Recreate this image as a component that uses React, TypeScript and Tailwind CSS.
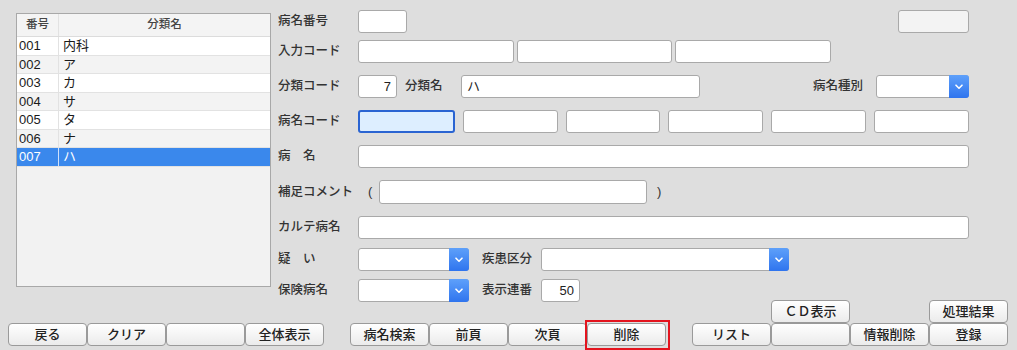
import type { ReactNode } from 'react';

const font = { fontFamily: '"Liberation Sans", "Noto Sans CJK JP", sans-serif' };

const rows = [
  { no: '001', name: '内科' },
  { no: '002', name: 'ア' },
  { no: '003', name: 'カ' },
  { no: '004', name: 'サ' },
  { no: '005', name: 'タ' },
  { no: '006', name: 'ナ' },
  { no: '007', name: 'ハ' },
];

function Box({
  className = '',
  focused = false,
  gray = false,
  children,
}: {
  className?: string;
  focused?: boolean;
  gray?: boolean;
  children?: ReactNode;
}) {
  const skin = focused
    ? 'border-2 border-[#2a64d2] bg-[#ddeeff]'
    : gray
      ? 'border border-[#a9a9a9] bg-[#f3f3f3]'
      : 'border border-[#a9a9a9] bg-white';
  return (
    <div className={`h-[23px] rounded-[3px] text-[13px] text-[#222] flex items-center px-[5px] shrink-0 ${skin} ${className}`}>
      {children}
    </div>
  );
}

function Select({ className = '' }: { className?: string }) {
  return (
    <div className={`h-[23px] rounded-[3px] border border-[#a9a9a9] bg-white flex shrink-0 ${className}`}>
      <div className="flex-1" />
      <div className="w-[20px] -my-px -mr-px rounded-r-[3px] bg-gradient-to-b from-[#5ea0fa] to-[#2f74ee] flex items-center justify-center">
        <svg width="8" height="6" viewBox="0 0 8 6" fill="none">
          <path d="M1 1.2 L4 4.2 L7 1.2" stroke="white" strokeWidth="1.6" strokeLinecap="round" strokeLinejoin="round" />
        </svg>
      </div>
    </div>
  );
}

function Label({ children, className = '' }: { children: ReactNode; className?: string }) {
  return <span className={`text-[12.5px] font-medium text-[#333] whitespace-nowrap shrink-0 ${className}`}>{children}</span>;
}

function Btn({ label = '' }: { label?: string }) {
  return (
    <button
      type="button"
      className="h-[23px] w-[79px] rounded-[4px] border border-[#9a9a9a] bg-gradient-to-b from-white to-[#ebebeb] text-[13px] font-medium text-[#222] flex items-center justify-center"
    >
      {label}
    </button>
  );
}

export default function App() {
  return (
    <div className="w-[1017px] h-[350px] bg-[#dedede] overflow-hidden flex flex-col" style={font}>
      <div className="flex h-[300px]">
        {/* 分類一覧 */}
        <div className="ml-[16px] mt-[13px] w-[255px] h-[274px] border border-[#a8a8a8] bg-[#f2f2f2] flex flex-col">
          <div className="flex h-[23px] bg-[#f4f4f4] border-b border-[#dcdcdc] text-[11.5px] font-medium text-[#444]">
            <div className="w-[42px] border-r border-[#e2e2e2] flex items-center justify-center">番号</div>
            <div className="flex-1 flex items-center justify-center">分類名</div>
          </div>
          {rows.map((r, i) => {
            const sel = r.no === '007';
            const bg = sel ? 'bg-[#3a88ec] text-white' : i % 2 === 0 ? 'bg-white text-[#1a1a1a]' : 'bg-[#f3f3f3] text-[#1a1a1a]';
            return (
              <div key={r.no} className={`flex h-[18.5px] text-[13px] border-b border-[#e2e2e2] ${bg}`}>
                <div className={`w-[42px] pl-[2px] flex items-center border-r ${sel ? 'border-[#cfe1fb]' : 'border-[#e2e2e2]'}`}>{r.no}</div>
                <div className="flex-1 pl-[4px] flex items-center">{r.name}</div>
              </div>
            );
          })}
        </div>

        {/* 入力フォーム */}
        <div className="ml-[7px] w-[691px] flex flex-col">
          <div className="mt-[10px] flex items-center">
            <Label className="w-[80px]">病名番号</Label>
            <Box className="w-[49px]" />
            <div className="flex-1" />
            <Box gray className="w-[71px]" />
          </div>

          <div className="mt-[7px] flex items-center gap-[3px]">
            <Label className="w-[77px]">入力コード</Label>
            <Box className="w-[156px]" />
            <Box className="w-[155px]" />
            <Box className="w-[156px]" />
          </div>

          <div className="mt-[12px] flex items-center">
            <Label className="w-[80px]">分類コード</Label>
            <Box className="w-[39px] justify-end">7</Box>
            <Label className="ml-[8px] w-[56px]">分類名</Label>
            <Box className="w-[239px]">ハ</Box>
            <div className="flex-1" />
            <Label className="mr-[13px]">病名種別</Label>
            <Select className="w-[93px]" />
          </div>

          <div className="mt-[12px] flex items-center">
            <Label className="w-[80px]">病名コード</Label>
            <div className="flex-1 flex gap-[8px]">
              <Box focused className="flex-1" />
              <Box className="flex-1" />
              <Box className="flex-1" />
              <Box className="flex-1" />
              <Box className="flex-1" />
              <Box className="flex-1" />
            </div>
          </div>

          <div className="mt-[12px] flex items-center">
            <Label className="w-[80px]">病　名</Label>
            <Box className="flex-1" />
          </div>

          <div className="mt-[12px] flex items-center">
            <Label className="w-[90px]">補足コメント</Label>
            <span className="w-[11px] text-[13px] text-[#333]">(</span>
            <Box className="w-[268px] h-[24px]" />
            <span className="ml-[10px] text-[13px] text-[#333]">)</span>
          </div>

          <div className="mt-[12px] flex items-center">
            <Label className="w-[80px]">カルテ病名</Label>
            <Box className="flex-1 h-[22px]" />
          </div>

          <div className="mt-[9px] flex items-center">
            <Label className="w-[80px]">疑　い</Label>
            <Select className="w-[111px]" />
            <Label className="ml-[13px] w-[59px]">疾患区分</Label>
            <Select className="w-[248px]" />
          </div>

          <div className="mt-[8px] flex items-center">
            <Label className="w-[80px]">保険病名</Label>
            <Select className="w-[111px]" />
            <Label className="ml-[13px] w-[59px]">表示連番</Label>
            <Box className="w-[39px] justify-end">50</Box>
          </div>
        </div>
      </div>

      {/* ボタン */}
      <div className="flex ml-[8px] gap-[26px]">
        <div className="flex self-end">
          <Btn label="戻る" />
          <Btn label="クリア" />
          <Btn />
          <Btn label="全体表示" />
        </div>
        <div className="flex self-end">
          <Btn label="病名検索" />
          <Btn label="前頁" />
          <Btn label="次頁" />
          <div className="relative">
            <Btn label="削除" />
            <div className="absolute -left-[2px] -top-[3px] w-[85px] h-[30px] border-2 border-[#e4141e]" />
          </div>
        </div>
        <div className="grid grid-cols-[79px_79px_79px_79px]">
          <div />
          <Btn label="ＣＤ表示" />
          <div />
          <Btn label="処理結果" />
          <Btn label="リスト" />
          <Btn />
          <Btn label="情報削除" />
          <Btn label="登録" />
        </div>
      </div>
    </div>
  );
}
